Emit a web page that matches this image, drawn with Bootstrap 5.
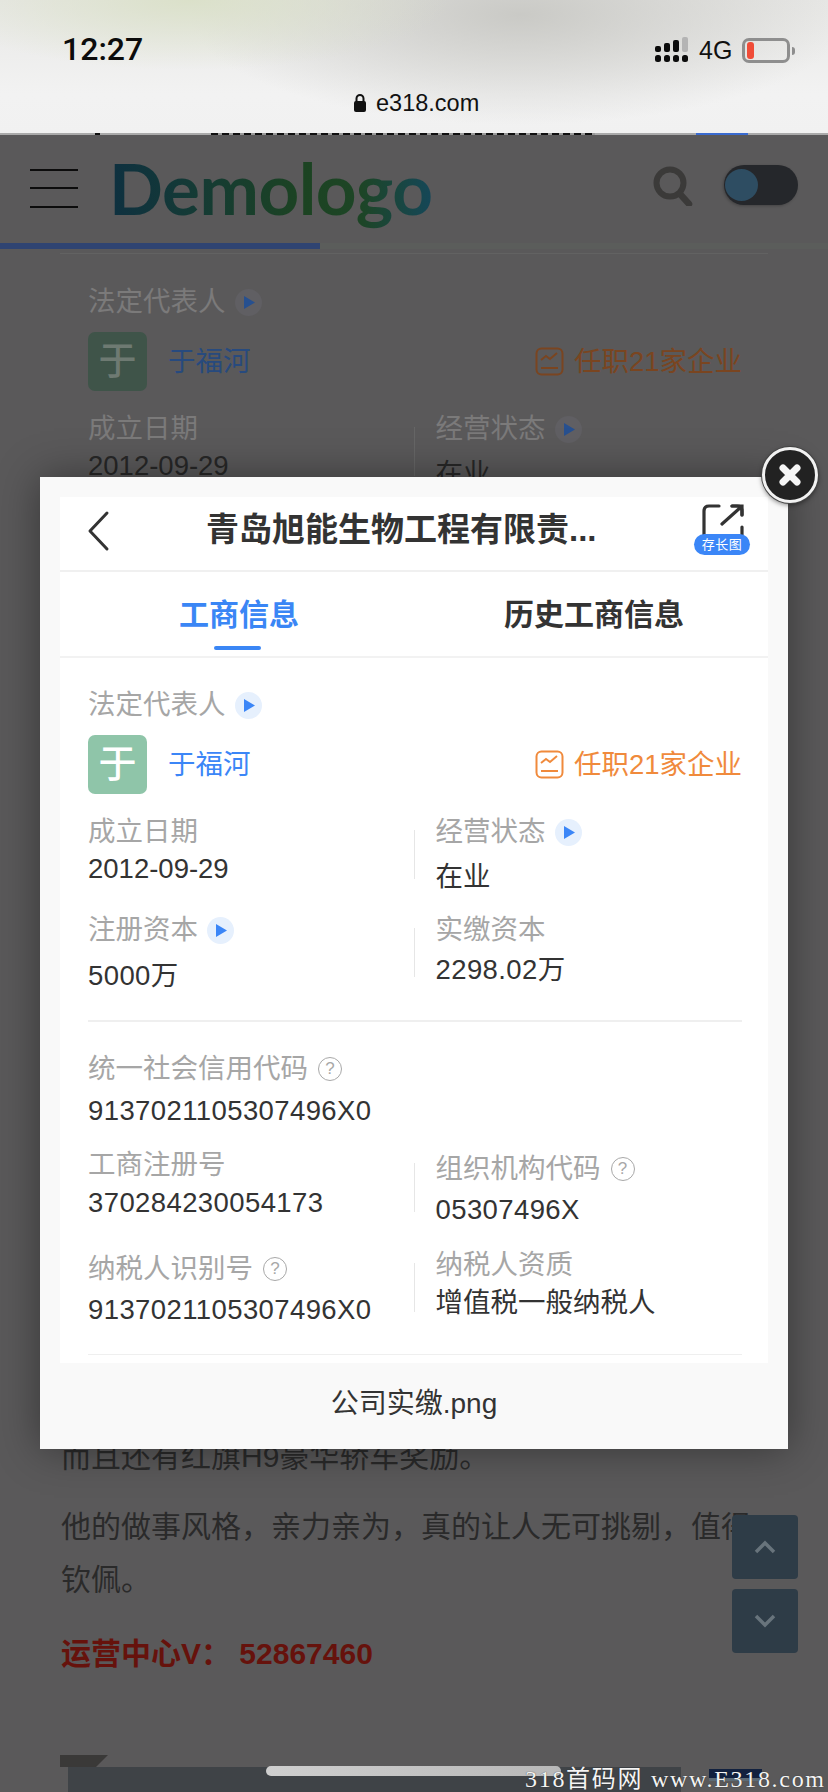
<!DOCTYPE html>
<html lang="zh">
<head>
<meta charset="utf-8">
<title>公司实缴</title>
<link href="https://cdn.jsdelivr.net/npm/bootstrap@5.3.0/dist/css/bootstrap.min.css" rel="stylesheet">
<style>
html,body{margin:0;background:#5a595a}
body{font-family:"Liberation Sans","Noto Sans CJK SC",sans-serif;width:828px;height:1792px;overflow:hidden;position:relative;color:#333}
.chrome{height:135px;position:relative;background:
 radial-gradient(ellipse 260px 70px at 190px 0,rgba(218,224,200,.95),rgba(218,224,200,0) 100%),
 radial-gradient(ellipse 330px 110px at 520px 15px,rgba(200,200,196,.95),rgba(200,200,196,0) 100%),
 linear-gradient(#e8e8e6,#f2f2f2 70%,#f1f1f1)}
.clock{position:absolute;left:62px;top:30px;font-family:Roboto,"Liberation Sans",sans-serif;font-size:32px;font-weight:500;line-height:38px;color:#0c0c0c}
.stat{position:absolute;left:655px;top:37px;height:26px}
.net{font-size:25px;line-height:26px;color:#111;margin:0 10px}
.cell{width:48px;height:25px;border:3px solid #8e8e8e;border-radius:7px;position:relative}
.cell::before{content:"";position:absolute;left:2px;top:1px;bottom:1px;width:7px;border-radius:3px;background:#f04c38}
.cell::after{content:"";position:absolute;right:-8px;top:6px;width:3px;height:8px;border-radius:0 3px 3px 0;background:#8e8e8e}
.addr{position:absolute;left:352px;top:88px;height:30px;font-size:23.5px;line-height:30px;color:#111}
.peek{position:absolute;left:0;right:0;bottom:0;height:2px;background:#aaa}
.peek1,.peek2,.peek3{position:absolute;top:0;height:2px}
.peek1{left:211px;width:384px;background:repeating-linear-gradient(90deg,#111 0 7px,#999 7px 11px)}
.peek2{left:696px;width:52px;background:#3a6bd0}
.peek3{left:95px;width:5px;background:#111}

.topnav{height:108px;padding:0 30px 0 30px}
.burger{width:48px;height:39px;margin-top:-2px;border-top:2px solid #0c0c0c;border-bottom:2px solid #0c0c0c;position:relative}
.burger::after{content:"";position:absolute;left:0;right:0;top:16px;height:2px;background:#0c0c0c}
.brand{margin-left:31px;font-family:Lato,"Liberation Sans",sans-serif;font-weight:700;font-size:71px;line-height:90px;margin-top:-3px;letter-spacing:-.5px;
 background:linear-gradient(90deg,#0e3040 0,#143a36 25%,#1c4322 60%,#1d4526 78%,#154759 100%);-webkit-background-clip:text;background-clip:text;color:transparent}
.switcher{width:74px;height:40px;border-radius:20px;background:#25272b;margin-left:32px;margin-top:-8px;padding:4px 0 0 1px;box-shadow:-1px 1px 3px rgba(0,0,0,.25)}
.knob{width:33px;height:32px;border-radius:50%;background:#2e4d62;display:block}
.mag{margin-top:-6px;margin-right:-1px}
.track{height:6px;background:#5b5d5b}
.track-fill{height:6px;width:320px;background:#2f4472}
.rule{height:1px;margin:4px 60px 0;background:#626262}

.info{padding:0 26px 0 28px}
.lab{font-size:27.5px;line-height:36px;height:36px;color:#a6a6a6;white-space:nowrap}
.val{font-size:27.5px;line-height:36px;height:36px;color:#333;white-space:nowrap}
.wide{letter-spacing:.4px}
.chip{width:27px;height:27px;border-radius:50%;background:#e6f0fd;margin-left:9px;flex:none}
.chip svg{display:block;margin:7px 0 0 9px;width:11px;height:13px;fill:#3b86f7}
.ask{width:24px;height:24px;border-radius:50%;border:1.5px solid #a8a8a8;color:#a8a8a8;font-size:17px;line-height:21px;text-align:center;margin-left:10px;flex:none}
.who{margin-top:12px;height:59px}
.ava{width:59px;height:59px;border-radius:7px;background:#8fc5a9;color:#fff;font-size:38px;line-height:58px;text-align:center;font-weight:500}
.name{margin-left:21px;font-size:27.5px;color:#3b86f7}
.job{font-size:27.5px;color:#f08a3c}
.job svg{margin-right:10px;stroke:#f08a3c}
.pair{display:grid;grid-template-columns:326px 1fr}
.side{padding-left:21.5px;position:relative}
.side::before{content:"";position:absolute;left:0;top:16px;height:49px;width:1px;background:#e6e6e6}
.hair{height:1.5px;background:#efefef}

.m12{margin-top:12px}.m17{margin-top:17px}.m18{margin-top:18px}.m19{margin-top:19px}.m20{margin-top:20px}.m26{margin-top:26px}.m29{margin-top:29px}
.v2{margin-top:2px}.v1{margin-top:1px}.v4{margin-top:4px}.v5{margin-top:5px}.v6{margin-top:6px}.v9{margin-top:9px}.v10{margin-top:10px}

.dim .lab{color:#7b7a7a}.dim .val{color:#272727}
.dim .chip{background:#605f63}.dim .chip svg{fill:#27508f}
.dim .ava{background:#3f5449;color:#6e7a72}
.dim .name{color:#274a7e}.dim .job{color:#7a4520}.dim .job svg{stroke:#7a4520}
.dim .side::before{background:#666}
.behind{padding:30px 60px 0}

.story{padding:0 0 0 61px;margin-top:938px;font-size:30px;line-height:53px;color:#2a2a2a;white-space:nowrap;height:325px}
.story p{margin:0 0 17px}
.story .hot{margin-top:21px;font-weight:700;color:#66120c;font-size:30px}
.foot{padding-left:60px}
.tab-shape{width:48px;height:12px;background:#3a3938;border-radius:0 0 22px 0;clip-path:polygon(0 0,100% 0,75% 100%,0 100%)}
.foot-bar{margin-left:8px;width:613px;height:26px;background:#3f4347}
.foot-tag{width:53px;height:12px;margin-left:28px;margin-top:2px;background:#12213f;border-bottom:3px solid #5d6a74}

.scrollers{position:absolute;left:732px;top:1515px;width:66px}
.arrowbtn{height:64px;background:#2e3c47;border-radius:4px;margin-bottom:10px}

.pop{position:absolute;left:40px;top:477px;width:748px;height:972px;background:#f9f9f9;padding:20px 20px 0;box-shadow:0 0 40px rgba(0,0,0,.4)}
.shot{height:866px;background:#fff;overflow:hidden}
.shot-head{height:75px;border-bottom:2px solid #f0f0f0;position:relative;padding-left:27px}
.back-arrow{display:block;padding-top:12px;height:56px;width:24px;box-sizing:content-box}
.shot-title{position:absolute;left:146px;top:14px;font-size:33px;line-height:38px;font-weight:700;color:#333;white-space:nowrap}
.saver{position:absolute;left:634px;top:6px;width:56px;height:52px}
.pill{position:absolute;left:0;bottom:0;width:56px;height:21px;border-radius:11px;background:#3b86f7;color:#fff;font-size:13px;line-height:21px;text-align:center;letter-spacing:.5px}
.shot-tabs{height:86px;border-bottom:2px solid #f2f2f2;position:relative}
.tabx{position:absolute;top:25px;font-size:30px;line-height:36px;font-weight:700;white-space:nowrap;color:#333}
.tabx.on{left:119px;color:#3a86f5}
.tabx.off{left:444px}
.tabline{position:absolute;left:154px;top:74px;width:47px;height:4px;border-radius:2px;background:#3a86f5}
.caption{text-align:center;font-size:28px;line-height:36px;color:#333;margin-top:23px}
.shut{position:absolute;left:762px;top:447px;width:56px;height:56px;border-radius:50%;background:#222;border:3px solid #f2f2f2;box-shadow:0 0 0 1px #444,0 2px 5px rgba(0,0,0,.5)}
.shut svg{display:block;margin:13px}
.bar-home{position:absolute;left:266px;top:1766px;width:295px;height:10px;border-radius:5px;background:linear-gradient(90deg,#cfcfcf,#b8b8b8)}
.mark-wm{position:absolute;left:525px;top:1765px;font-family:"Liberation Serif","Noto Sans CJK SC",serif;font-size:24px;line-height:28px;letter-spacing:1.7px;color:#f4f4f4;white-space:nowrap;text-shadow:0 0 1px #222}
</style>
</head>
<body>

<div class="chrome">
  <div class="clock">12:27</div>
  <div class="stat d-flex align-items-center">
    <svg width="34" height="26" viewBox="0 0 34 26" fill="#0c0c0c">
      <rect x="0" y="9" width="6" height="6" rx="2"/><rect x="9" y="6" width="6" height="9" rx="2"/><rect x="18" y="3" width="6" height="12" rx="2"/><rect x="27" y="0" width="6" height="15" rx="2" fill="#b4b4b4"/>
      <rect x="0" y="18" width="6" height="7" rx="2.5"/><rect x="9" y="18" width="6" height="7" rx="2.5"/><rect x="18" y="18" width="6" height="7" rx="2.5"/><rect x="27" y="18" width="6" height="7" rx="2.5"/>
    </svg>
    <span class="net">4G</span>
    <span class="cell"></span>
  </div>
  <div class="addr d-flex align-items-center">
    <svg class="me-2" width="16" height="20" viewBox="0 0 16 20"><rect x="2" y="8" width="12" height="11" rx="2" fill="#111"/><path d="M4.5 9V5.5a3.500 3.500 0 0 1 7 0V9" fill="none" stroke="#111" stroke-width="2"/></svg>
    <span>e318.com</span>
  </div>
  <div class="peek"><span class="peek3"></span><span class="peek1"></span><span class="peek2"></span></div>
</div>

<div class="topnav d-flex align-items-center">
  <div class="burger"></div>
  <div class="brand">Demologo</div>
  <div class="ms-auto d-flex align-items-center">
    <svg class="mag" width="40" height="40" viewBox="0 0 40 40" fill="none" stroke="#3b3a39"><circle cx="17" cy="17" r="13.500" stroke-width="6"/><path d="M27 28l9 10" stroke-width="6.500" stroke-linecap="round"/></svg>
    <div class="switcher"><span class="knob"></span></div>
  </div>
</div>
<div class="track"><div class="track-fill"></div></div>
<div class="rule"></div>

<div class="behind dim">
  <div class="info">
    <div class="lab d-flex align-items-center">法定代表人<span class="chip"><svg viewBox="0 0 11 13"><path d="M0 0l11 6.500L0 13z"/></svg></span></div>
    <div class="who d-flex align-items-center">
      <div class="ava">于</div><div class="name">于福河</div>
      <div class="job ms-auto d-flex align-items-center">
        <svg width="29" height="29" viewBox="0 0 29 29" fill="none" stroke-width="2"><rect x="1.500" y="1.500" width="26" height="26" rx="5"/><path d="M6 13l5-4 4 3 7-6M6 21h17"/></svg>任职21家企业
      </div>
    </div>
    <div class="pair m20">
      <div><div class="lab">成立日期</div><div class="val v1">2012-09-29</div></div>
      <div class="side"><div class="lab d-flex align-items-center">经营状态<span class="chip"><svg viewBox="0 0 11 13"><path d="M0 0l11 6.500L0 13z"/></svg></span></div><div class="val v9">在业</div></div>
    </div>
  </div>
</div>

<div class="story">
  <p>而且还有红旗H9豪华轿车奖励。</p>
  <p>他的做事风格，亲力亲为，真的让人无可挑剔，值得<br>钦佩。</p>
  <p class="hot">运营中心V：&nbsp;52867460</p>
</div>

<div class="foot">
  <div class="tab-shape"></div>
  <div class="d-flex align-items-start">
    <div class="foot-bar"></div>
    <div class="foot-tag"></div>
  </div>
</div>

<div class="scrollers">
  <div class="arrowbtn d-flex align-items-center justify-content-center"><svg width="22" height="14" viewBox="0 0 22 14" fill="none" stroke="#68747c" stroke-width="3.500"><path d="M2 12l9-9 9 9"/></svg></div>
  <div class="arrowbtn d-flex align-items-center justify-content-center"><svg width="22" height="14" viewBox="0 0 22 14" fill="none" stroke="#68747c" stroke-width="3.500"><path d="M2 2l9 9 9-9"/></svg></div>
</div>

<div class="pop">
  <div class="shot">
    <div class="shot-head">
      <div class="back-arrow"><svg class="d-block" width="24" height="44" viewBox="0 0 24 44" fill="none" stroke="#333" stroke-width="3" stroke-linecap="round" stroke-linejoin="round"><path d="M20 4L3 22l17 18"/></svg></div>
      <div class="shot-title">青岛旭能生物工程有限责...</div>
      <div class="saver">
        <svg width="56" height="40" viewBox="0 0 56 40" fill="none" stroke="#333" stroke-width="3.200" stroke-linecap="round"><path d="M10 36V8q0-5 5-5h10M38 3h5q5 0 5 5v4M48 24v12"/><path d="M28 21L47 4M38 3h10v9"/></svg>
        <div class="pill">存长图</div>
      </div>
    </div>
    <div class="shot-tabs">
      <div class="tabx on">工商信息</div>
      <div class="tabx off">历史工商信息</div>
      <div class="tabline"></div>
    </div>
    <div class="info">
      <div class="lab d-flex align-items-center m29">法定代表人<span class="chip"><svg viewBox="0 0 11 13"><path d="M0 0l11 6.500L0 13z"/></svg></span></div>
      <div class="who d-flex align-items-center">
        <div class="ava">于</div><div class="name">于福河</div>
        <div class="job ms-auto d-flex align-items-center">
          <svg width="29" height="29" viewBox="0 0 29 29" fill="none" stroke-width="2"><rect x="1.500" y="1.500" width="26" height="26" rx="5"/><path d="M6 13l5-4 4 3 7-6M6 21h17"/></svg>任职21家企业
        </div>
      </div>
      <div class="pair m20">
        <div><div class="lab">成立日期</div><div class="val v1">2012-09-29</div></div>
        <div class="side"><div class="lab d-flex align-items-center">经营状态<span class="chip"><svg viewBox="0 0 11 13"><path d="M0 0l11 6.500L0 13z"/></svg></span></div><div class="val v9">在业</div></div>
      </div>
      <div class="pair m17">
        <div><div class="lab d-flex align-items-center">注册资本<span class="chip"><svg viewBox="0 0 11 13"><path d="M0 0l11 6.500L0 13z"/></svg></span></div><div class="val v10 wide">5000万</div></div>
        <div class="side"><div class="lab">实缴资本</div><div class="val v4 wide">2298.02万</div></div>
      </div>
      <div class="hair m26"></div>
      <div class="lab d-flex align-items-center m29">统一社会信用代码<span class="ask">?</span></div>
      <div class="val v6 wide">9137021105307496X0</div>
      <div class="pair m18">
        <div><div class="lab">工商注册号</div><div class="val v2 wide">370284230054173</div></div>
        <div class="side"><div class="lab d-flex align-items-center v4">组织机构代码<span class="ask">?</span></div><div class="val v5 wide">05307496X</div></div>
      </div>
      <div class="pair m19">
        <div><div class="lab d-flex align-items-center v4">纳税人识别号<span class="ask">?</span></div><div class="val v5 wide">9137021105307496X0</div></div>
        <div class="side"><div class="lab">纳税人资质</div><div class="val v2">增值税一般纳税人</div></div>
      </div>
      <div class="hair m26"></div>
    </div>
  </div>
  <div class="caption">公司实缴.png</div>
</div>

<div class="shut"><svg width="24" height="24" viewBox="0 0 24 24" stroke="#f4f4f4" stroke-width="7" stroke-linecap="round"><path d="M5 5l14 14M19 5L5 19"/></svg></div>

<div class="bar-home"></div>
<div class="mark-wm">318首码网 www.E318.com</div>
</body>
</html>
